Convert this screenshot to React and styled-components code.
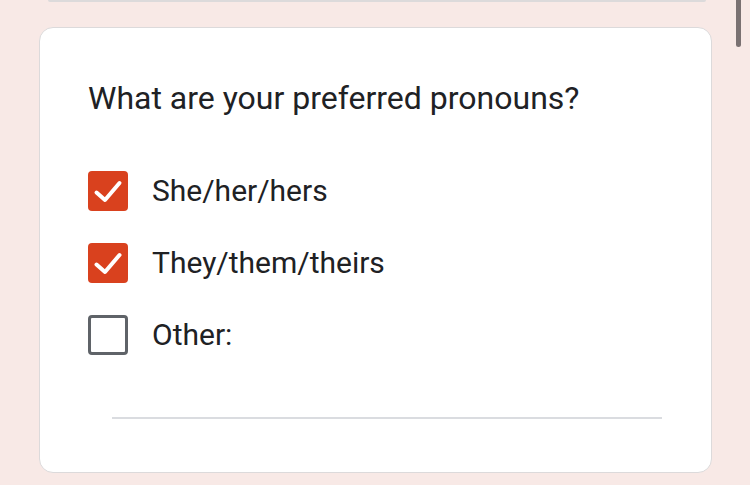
import styled, { createGlobalStyle } from "styled-components";

const GlobalStyle = createGlobalStyle`
  html, body {
    margin: 0;
    padding: 0;
    background: #f8e9e6;
    font-family: Roboto, "Liberation Sans", Arial, sans-serif;
    color: #202124;
  }
`;

const options = [
  { label: "She/her/hers", checked: true },
  { label: "They/them/theirs", checked: true },
  { label: "Other:", checked: false },
];

const App = () => {
  return (
    <>
      <GlobalStyle />
      <Page>
        <PrevCard />
        <Card>
          <Question>What are your preferred pronouns?</Question>
          <OptionList>
            {options.map((o) => (
              <Option key={o.label}>
                <Box checked={o.checked}>
                  {o.checked && (
                    <svg width="40" height="40" viewBox="0 0 40 40">
                      <path
                        d="M8.5 21.5l8.5 7.5L31.5 12"
                        fill="none"
                        stroke="#fff"
                        strokeWidth="4"
                        strokeLinecap="round"
                        strokeLinejoin="round"
                      />
                    </svg>
                  )}
                </Box>
                <Label>{o.label}</Label>
              </Option>
            ))}
          </OptionList>
          <Divider />
        </Card>
        <Scrollbar />
      </Page>
    </>
  );
};

export default App;

const Page = styled.div`
  position: relative;
  width: 750px;
  height: 485px;
  overflow: hidden;
`;

const PrevCard = styled.div`
  height: 0;
  margin: 0 44px 0 48px;
  border-bottom: 2px solid #dcdadb;
  border-radius: 0 0 8px 8px;
`;

const Card = styled.section`
  box-sizing: border-box;
  margin: 25px 0 0 39px;
  width: 673px;
  height: 446px;
  background: #fff;
  border: 1.5px solid #dcdadb;
  border-radius: 14px;
  padding: 51px 48px 0 48px;
`;

const Question = styled.h2`
  margin: 0;
  font-size: 32px;
  font-weight: 400;
  line-height: 38px;
  color: #202124;
`;

const OptionList = styled.div`
  display: flex;
  flex-direction: column;
  gap: 32px;
  margin-top: 54px;
`;

const Option = styled.div`
  display: flex;
  align-items: center;
  gap: 24px;
  height: 40px;
`;

const Box = styled.div`
  box-sizing: border-box;
  width: 40px;
  height: 40px;
  border-radius: 4px;
  display: flex;
  align-items: center;
  justify-content: center;
  background: ${(p) => (p.checked ? "#d9411e" : "#fff")};
  border: ${(p) => (p.checked ? "none" : "3px solid #5f6368")};
`;

const Label = styled.span`
  font-size: 30px;
  line-height: 40px;
  color: #202124;
`;

const Divider = styled.div`
  margin: 62px 0 0 24px;
  width: 550px;
  height: 1.5px;
  background: #dadce0;
`;

const Scrollbar = styled.div`
  position: absolute;
  top: 0;
  right: 9px;
  width: 5px;
  height: 47px;
  border-radius: 0 0 3px 3px;
  background: #7a7172;
`;
